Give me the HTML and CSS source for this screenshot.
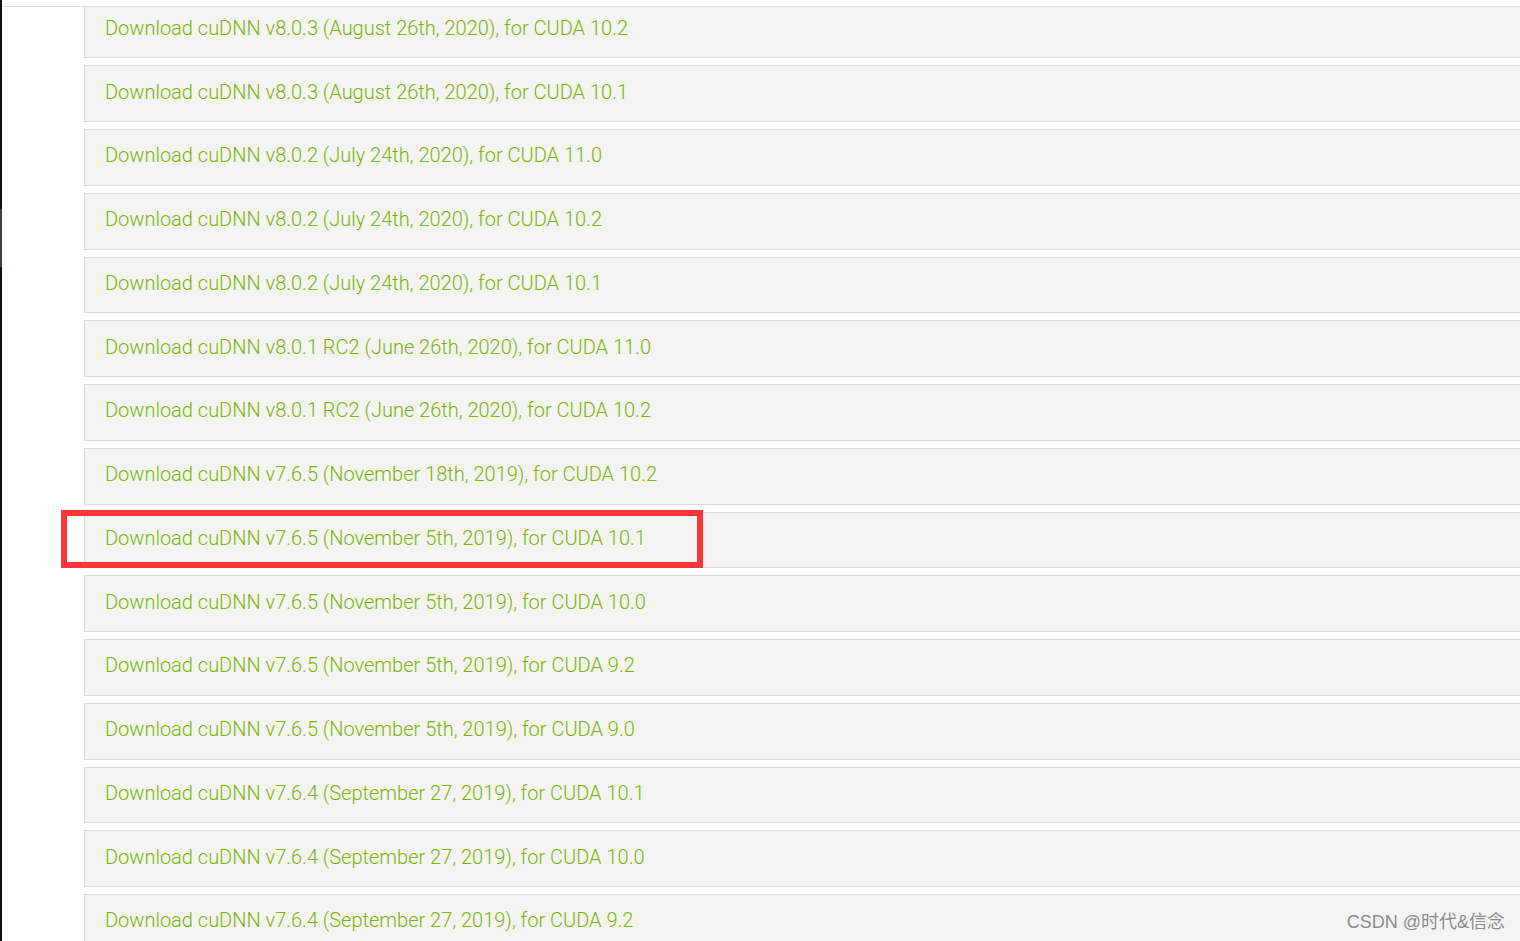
FILE: index.html
```html
<!DOCTYPE html>
<html lang="en">
<head>
<meta charset="utf-8">
<title>cuDNN Archive</title>
<link rel="stylesheet" href="styles.css">
</head>
<body>
<div class="page">
  <div class="edge"><div class="edge-thumb"></div></div>
  <div class="main">
    <div class="topline"></div>
    <div class="clip">
      <ul class="list">
        <li class="row"><a href="#">Download cuDNN v8.0.3 (August 26th, 2020), for CUDA 10.2</a></li>
        <li class="row"><a href="#">Download cuDNN v8.0.3 (August 26th, 2020), for CUDA 10.1</a></li>
        <li class="row"><a href="#">Download cuDNN v8.0.2 (July 24th, 2020), for CUDA 11.0</a></li>
        <li class="row"><a href="#">Download cuDNN v8.0.2 (July 24th, 2020), for CUDA 10.2</a></li>
        <li class="row"><a href="#">Download cuDNN v8.0.2 (July 24th, 2020), for CUDA 10.1</a></li>
        <li class="row"><a href="#">Download cuDNN v8.0.1 RC2 (June 26th, 2020), for CUDA 11.0</a></li>
        <li class="row"><a href="#">Download cuDNN v8.0.1 RC2 (June 26th, 2020), for CUDA 10.2</a></li>
        <li class="row"><a href="#">Download cuDNN v7.6.5 (November 18th, 2019), for CUDA 10.2</a></li>
        <li class="row row--marked"><a href="#">Download cuDNN v7.6.5 (November 5th, 2019), for CUDA 10.1</a><span class="highlight"></span></li>
        <li class="row"><a href="#">Download cuDNN v7.6.5 (November 5th, 2019), for CUDA 10.0</a></li>
        <li class="row"><a href="#">Download cuDNN v7.6.5 (November 5th, 2019), for CUDA 9.2</a></li>
        <li class="row"><a href="#">Download cuDNN v7.6.5 (November 5th, 2019), for CUDA 9.0</a></li>
        <li class="row"><a href="#">Download cuDNN v7.6.4 (September 27, 2019), for CUDA 10.1</a></li>
        <li class="row"><a href="#">Download cuDNN v7.6.4 (September 27, 2019), for CUDA 10.0</a></li>
        <li class="row"><a href="#">Download cuDNN v7.6.4 (September 27, 2019), for CUDA 9.2</a></li>
      </ul>
    </div>
  </div>
  <div class="watermark">CSDN @时代&amp;信念</div>
</div>
</body>
</html>
```
FILE: styles.css
```css
html, body {
  margin: 0;
  padding: 0;
  background: #ffffff;
  overflow: hidden;
  height: 100%;
}

.page {
  position: relative;
  display: flex;
  height: 941px;
  width: 1520px;
  overflow: hidden;
  font-family: Roboto, "Liberation Sans", sans-serif;
}

.edge {
  width: 2px;
  flex: 0 0 2px;
  background: #0c1018;
  padding-top: 209px;
  box-sizing: border-box;
}

.edge-thumb {
  height: 58px;
  background: #3c3f45;
}

.main {
  flex: 1;
  display: flex;
  flex-direction: column;
  min-width: 0;
}

.topline {
  height: 6px;
  flex: 0 0 6px;
  border-bottom: 1px solid #dddddd;
  background: #ffffff;
}

.clip {
  flex: 1;
  overflow: hidden;
}

.list {
  list-style: none;
  margin: -5.45px -20px 0 82px;
  padding: 0;
}

.row {
  position: relative;
  box-sizing: border-box;
  height: 56.75px;
  margin-bottom: 7px;
  background: #f4f4f4;
  border: 1px solid #dcdcdc;
  border-right: none;
  padding: 0 0 4px 20px;
  display: flex;
  align-items: center;
}

.row a {
  color: #78b800;
  text-decoration: none;
  font-size: 20px;
  font-weight: 300;
  letter-spacing: 0;
  white-space: nowrap;
}

.highlight {
  position: absolute;
  left: -24px;
  top: -2.5px;
  width: 642px;
  height: 57.5px;
  box-sizing: border-box;
  border: 6.5px solid #fd3737;
  pointer-events: none;
}

.watermark {
  position: absolute;
  right: 15px;
  bottom: 8px;
  font-family: "Liberation Sans", "Noto Sans CJK SC", sans-serif;
  font-size: 18px;
  color: #8a8a8a;
  text-shadow: 0 0 1px #ffffff;
  white-space: nowrap;
}
```
